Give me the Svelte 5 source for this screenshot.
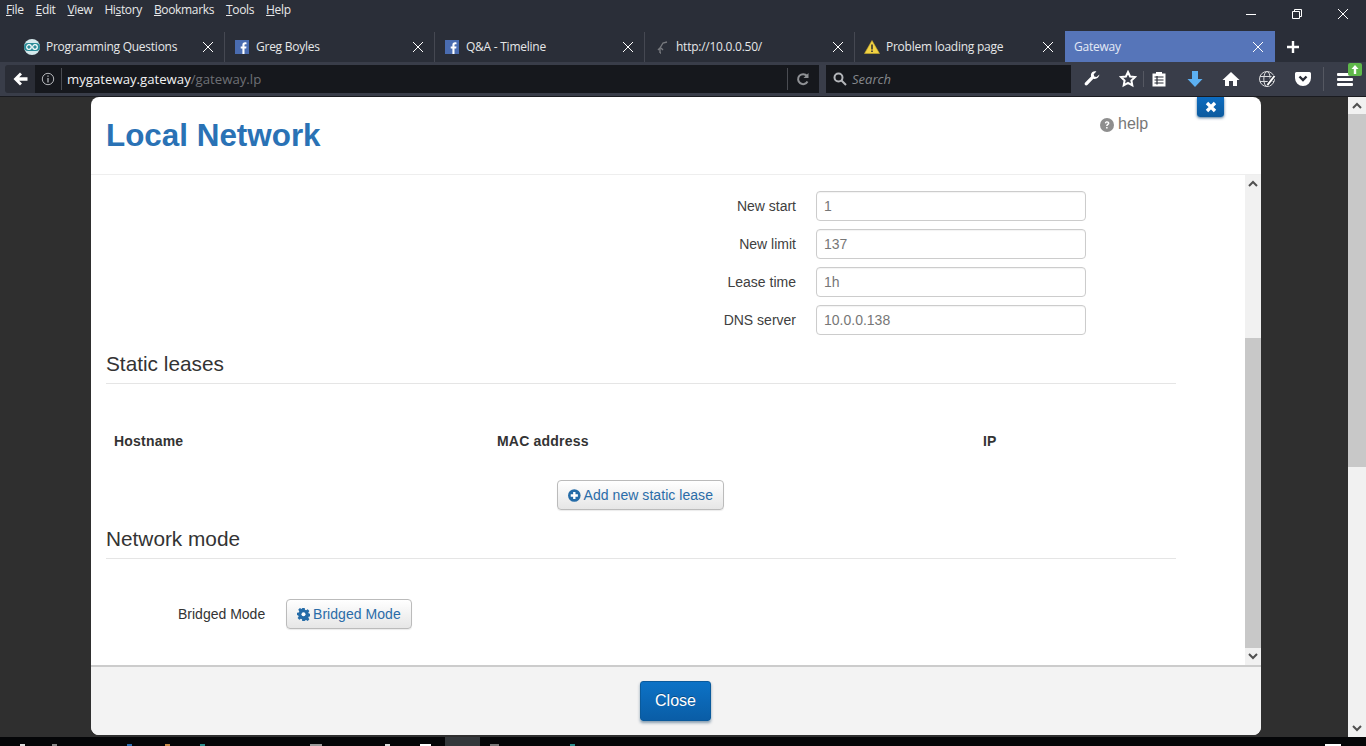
<script>
  const menus = [
    ['', 'F', 'ile'], ['', 'E', 'dit'], ['', 'V', 'iew'], ['Hi', 's', 'tory'], ['', 'B', 'ookmarks'], ['', 'T', 'ools'], ['', 'H', 'elp']
  ];
  const tabs = [
    { title: 'Programming Questions', icon: 'arduino' },
    { title: 'Greg Boyles', icon: 'fb' },
    { title: 'Q&A - Timeline', icon: 'fb' },
    { title: 'http://10.0.0.50/', icon: 'loading' },
    { title: 'Problem loading page', icon: 'warn' },
    { title: 'Gateway', icon: '', active: true }
  ];
  const fields = [
    { label: 'New start', value: '1' },
    { label: 'New limit', value: '137' },
    { label: 'Lease time', value: '1h' },
    { label: 'DNS server', value: '10.0.0.138' }
  ];
  // bits of the taskbar icons that peek out at the bottom edge
  const specks = [
    [20, 5, '#ddd'], [52, 5, '#888'], [127, 5, '#2a6db0'], [165, 5, '#c88a4a'], [200, 5, '#2a8c8c'],
    [310, 12, '#999'], [385, 5, '#ddd'], [420, 11, '#fff'], [490, 9, '#777'], [570, 5, '#2a8c8c'], [1325, 16, '#fff']
  ];
</script>

<div class="window">
  <header class="chrome">
    <div class="titlebar">
      <nav class="menu">
        {#each menus as m}
          <span class="menu-item">{m[0]}<u>{m[1]}</u>{m[2]}</span>
        {/each}
      </nav>
      <div class="win-controls">
        <svg width="12" height="12" viewBox="0 0 12 12" stroke="#fff" fill="none"><path d="M1 6.500h10" /></svg>
        <svg width="12" height="12" viewBox="0 0 12 12" stroke="#fff" fill="none"><path d="M1.500 3.500h7v7h-7zM3.500 3.500v-2h7v7h-2" /></svg>
        <svg width="12" height="12" viewBox="0 0 12 12" stroke="#fff" fill="none"><path d="M1 1l10 10M11 1L1 11" /></svg>
      </div>
    </div>

    <div class="tabstrip">
      {#each tabs as tab}
        <div class="tab" class:active={tab.active}>
          {#if tab.icon === 'arduino'}
            <svg class="fav" width="16" height="16" viewBox="0 0 16 16">
              <circle cx="8" cy="8" r="8" fill="#d5e9ec" />
              <rect x="0" y="4" width="16" height="8" rx="4" fill="#2a8c98" />
              <circle cx="5" cy="8" r="2.300" fill="none" stroke="#fff" stroke-width="1.200" />
              <circle cx="11" cy="8" r="2.300" fill="none" stroke="#fff" stroke-width="1.200" />
            </svg>
          {:else if tab.icon === 'fb'}
            <svg class="fav small" width="14" height="14" viewBox="0 0 14 14">
              <rect width="14" height="14" fill="#4a6cb0" />
              <path d="M9.500 14V8.600h1.700l.3-2.100h-2V5.200c0-.6.2-1 1-1h1V2.400c-.3 0-.9-.1-1.500-.1-1.600 0-2.600 1-2.600 2.700v1.500H5.700v2.100h1.700V14z" fill="#fff" />
            </svg>
          {:else if tab.icon === 'loading'}
            <svg class="fav small" width="14" height="14" viewBox="0 0 14 14" fill="none" stroke="#77797e" stroke-width="1.400">
              <path d="M5 13V8L3 10M5 8l3-5 4-1M5 13h1M6 8l2 2" />
            </svg>
          {:else if tab.icon === 'warn'}
            <svg class="fav" width="16" height="14" viewBox="0 0 16 14">
              <path d="M8 0.500L15.500 13.500H0.500z" fill="#f2d343" stroke="#c9a92c" stroke-width="0.600" />
              <path d="M7.200 4.500h1.600v5h-1.600zM7.200 10.500h1.600V12h-1.600z" fill="#333" />
            </svg>
          {/if}
          <span class="tab-title">{tab.title}</span>
          <svg class="tab-close" width="12" height="12" viewBox="0 0 12 12" stroke="#fff" fill="none"><path d="M1 1l10 10M11 1L1 11" /></svg>
        </div>
      {/each}
      <svg class="newtab" width="14" height="14" viewBox="0 0 14 14" fill="#fff"><path d="M5.800 1h2.400v4.800H13v2.400H8.200V13H5.800V8.200H1V5.800h4.800z" /></svg>
    </div>

    <div class="navbar">
      <button class="back" aria-label="Back">
        <svg width="15" height="14" viewBox="0 0 15 14" fill="#fff"><path d="M7 0.500l2 2L6.200 5.300H14.500v3.400H6.200L9 11.500l-2 2L0.500 7z" /></svg>
      </button>
      <div class="urlbar">
        <svg class="info" width="14" height="14" viewBox="0 0 14 14" fill="none" stroke="#b4b6ba"><circle cx="7" cy="7" r="5.700" /><path d="M7 6v4.500M7 3.400v1.300" stroke-width="1.300" /></svg>
        <span class="url"><b>mygateway.gateway</b><i>/gateway.lp</i></span>
        <svg class="reload" width="14" height="14" viewBox="0 0 14 14" fill="none" stroke="#8f9195" stroke-width="2"><path d="M11.500 9.500A5 5 0 1 1 11 4" /><path d="M12.500 1v5h-5z" fill="#8f9195" stroke="none" /></svg>
      </div>
      <div class="searchbar">
        <svg width="14" height="14" viewBox="0 0 14 14" fill="none" stroke="#b4b6ba" stroke-width="2"><circle cx="5.500" cy="5.500" r="4" /><path d="M8.500 8.500L13 13" /></svg>
        <span>Search</span>
      </div>
      <div class="tools">
        <svg width="18" height="18" viewBox="0 0 18 18" fill="#fff"><path d="M16.500 4.500l-3 2.500-2.200-.6-.6-2.200 2.700-2.700c-2.300-.8-4.800.3-5.400 2.700-.2.900-.1 1.700.1 2.400L2 12.700c-1.400 1.500.9 3.800 2.400 2.300l6-6.300c2.700.8 5.500-.9 6.100-4.200z" /></svg>
        <svg width="18" height="18" viewBox="0 0 18 18" fill="none" stroke="#fff" stroke-width="2"><path d="M9 2l2.100 4.500 4.900.6-3.600 3.400.9 4.900L9 13l-4.300 2.400.9-4.900L2 7.100l4.900-.6z" /></svg>
        <span class="tool-sep"></span>
        <svg width="18" height="18" viewBox="0 0 18 18"><path d="M2.500 3.500H6V2h6v1.500h3.500v13h-13z" fill="#fff" /><path d="M4.500 7h9M4.500 10h9M4.500 13h9M7 6v8.500" stroke="#2a2e38" stroke-width="1.200" /></svg>
        <svg width="18" height="18" viewBox="0 0 18 18" fill="#5cb0f2"><path d="M6 1h6v8h4.500L9 17 1.500 9H6z" /></svg>
        <svg width="18" height="18" viewBox="0 0 18 18" fill="#fff"><path d="M9 2l8.500 8H15v6h-4v-5H7v5H3v-6H.5z" /></svg>
        <svg width="18" height="18" viewBox="0 0 18 18" fill="none" stroke="#d8d9db" stroke-width="1"><circle cx="9" cy="9" r="7.500" /><ellipse cx="9" cy="9" rx="3.200" ry="7.500" /><path d="M2 6.500h14M2 11.500h14" /><path d="M16.500 6l-7 9" stroke="#2a2e38" stroke-width="4" /><path d="M16.500 6l-7 9" stroke="#fff" stroke-width="2" /></svg>
        <svg width="18" height="18" viewBox="0 0 18 18"><path d="M2.500 2h13A1.500 1.500 0 0 1 17 3.500V8a8 8 0 0 1-16 0V3.500A1.500 1.500 0 0 1 2.500 2z" fill="#fff" /><path d="M5.500 6.500L9 10l3.500-3.500" fill="none" stroke="#2a2e38" stroke-width="2.400" /></svg>
        <span class="tool-sep hamb-sep"></span>
        <div class="hamburger">
          <span></span><span></span><span></span>
          <i class="badge"><svg width="8" height="9" viewBox="0 0 8 9" fill="#fff"><path d="M4 0l3.500 4H5.200v5H2.800V4H.5z" /></svg></i>
        </div>
      </div>
    </div>
  </header>

  <main class="page">
    <div class="modal-wrap">
      <section class="modal">
        <button class="modal-x" aria-label="Dismiss">
          <svg width="12" height="12" viewBox="0 0 12 12" stroke="#fff" stroke-width="3.400"><path d="M2 2l8 8M10 2l-8 8" /></svg>
        </button>
        <div class="modal-head">
          <h1>Local Network</h1>
          <a class="help" href="#help">
            <svg width="14" height="14" viewBox="0 0 14 14"><circle cx="7" cy="7" r="7" fill="#8e8e8e" /><path d="M4.800 5.300C5 3.900 6 3.300 7.100 3.300c1.300 0 2.300.8 2.300 1.900 0 1.700-1.800 1.500-1.800 2.900H6.100c0-2 1.700-2 1.700-2.800 0-.4-.3-.7-.8-.7s-.8.300-.9.900zM6.100 9h1.500v1.500H6.100z" fill="#fff" /></svg>
            help
          </a>
        </div>

        <div class="modal-scroll">
          <div class="modal-body">
            <div class="fields">
              {#each fields as f}
                <div class="field">
                  <span class="field-label">{f.label}</span>
                  <div class="input">{f.value}</div>
                </div>
              {/each}
            </div>

            <h2>Static leases</h2>
            <div class="lease-head">
              <span class="c1">Hostname</span>
              <span class="c2">MAC address</span>
              <span class="c3">IP</span>
            </div>
            <div class="add-row">
              <button class="btn">
                <svg width="13" height="13" viewBox="0 0 13 13"><circle cx="6.500" cy="6.500" r="6.500" fill="#256ca8" /><path d="M5.300 2.800h2.400v2.500h2.500v2.400H7.700v2.500H5.300V7.700H2.800V5.300h2.500z" fill="#fff" /></svg>
                Add new static lease
              </button>
            </div>

            <h2>Network mode</h2>
            <div class="bridge-row">
              <span class="bridge-label">Bridged Mode</span>
              <button class="btn">
                <svg width="13" height="13" viewBox="0 0 13 13"><path d="M5.300 0h2.400l.3 1.800 1.100.5L10.700 1.200l1.700 1.700-1.100 1.600.5 1.100 1.800.3v2.400l-1.800.3-.5 1.100 1.100 1.600-1.700 1.700-1.600-1.100-1.100.5-.3 1.800H5.300L5 11.200l-1.100-.5-1.600 1.100L.6 10.100l1.100-1.600-.5-1.100L0 7.100V4.700l1.800-.3.500-1.100L1.200 1.700 2.900 0l1.600 1.100L5 .6z" fill="#256ca8" /><circle cx="6.500" cy="6.200" r="2" fill="#fff" /></svg>
                Bridged Mode
              </button>
            </div>
          </div>
          <div class="scrollbar inner">
            <svg class="arrow" width="10" height="7" viewBox="0 0 10 7" fill="none" stroke="#505050" stroke-width="2"><path d="M1 6l4-4 4 4" /></svg>
            <div class="track"><div class="thumb"></div></div>
            <svg class="arrow" width="10" height="7" viewBox="0 0 10 7" fill="none" stroke="#505050" stroke-width="2"><path d="M1 1l4 4 4-4" /></svg>
          </div>
        </div>

        <div class="modal-foot">
          <button class="close-btn">Close</button>
        </div>
      </section>

      <div class="scrollbar outer">
        <svg class="arrow" width="10" height="7" viewBox="0 0 10 7" fill="none" stroke="#505050" stroke-width="2"><path d="M1 6l4-4 4 4" /></svg>
        <div class="track"><div class="thumb"></div></div>
        <svg class="arrow" width="10" height="7" viewBox="0 0 10 7" fill="none" stroke="#505050" stroke-width="2"><path d="M1 1l4 4 4-4" /></svg>
      </div>
    </div>
  </main>

  <footer class="taskbar">
    <span class="task-active"></span>
    {#each specks as s}
      <span class="speck" style="left:{s[0]}px;width:{s[1]}px;background:{s[2]}"></span>
    {/each}
  </footer>
</div>

<style>
  :global(body) {
    margin: 0;
    background: #000;
    overflow: hidden;
  }

  .window {
    width: 1366px;
    height: 746px;
    display: flex;
    flex-direction: column;
    font-family: "Liberation Sans", Arial, sans-serif;
    overflow: hidden;
  }

  button {
    font-family: inherit;
    cursor: pointer;
  }

  /* browser chrome */
  .chrome {
    height: 97px;
    background: #2a2e38;
    color: #fff;
    font-family: "Open Sans", "Noto Sans", sans-serif;
    flex: none;
    box-sizing: border-box;
    border-bottom: 1px solid #1a1b20;
  }

  .titlebar {
    height: 31px;
    display: flex;
    justify-content: space-between;
  }

  .menu {
    display: flex;
    gap: 12px;
    padding: 1px 0 0 6px;
    font-size: 12px;
    letter-spacing: -0.35px;
    line-height: 17px;
    color: #e8e9ea;
  }

  .win-controls {
    display: flex;
    gap: 34px;
    padding: 8px 17px 0 0;
    height: 12px;
  }

  .tabstrip {
    height: 31px;
    display: flex;
    align-items: stretch;
    padding-left: 15px;
  }

  .tab {
    width: 210px;
    box-sizing: border-box;
    display: flex;
    align-items: center;
    position: relative;
    padding-left: 9px;
    font-size: 12px;
    letter-spacing: -0.25px;
    color: #e6e7e8;
  }

  .tab::after {
    content: "";
    position: absolute;
    right: 0;
    top: 1px;
    bottom: 0;
    width: 1px;
    background: #454852;
  }

  .tab.active {
    background: #5675b9;
    color: #e4e9f5;
  }

  .tab.active::after,
  .tab:nth-child(5)::after {
    display: none;
  }

  .fav {
    flex: none;
    margin-right: 6px;
  }

  .fav.small {
    margin-left: 1px;
    margin-right: 7px;
  }

  .tab-title {
    flex: 1;
  }

  .tab-close {
    flex: none;
    margin-right: 11px;
  }

  .newtab {
    align-self: center;
    margin-left: 11px;
  }

  .navbar {
    height: 34px;
    background: #393d49;
    display: flex;
    align-items: center;
    padding: 2px 0 3px 5px;
    box-sizing: border-box;
  }

  .back {
    width: 30px;
    height: 28px;
    background: #2a2d36;
    border: 0;
    border-radius: 3px 0 0 3px;
    padding: 0 0 0 1px;
    display: flex;
    align-items: center;
    justify-content: center;
  }

  .urlbar {
    width: 784px;
    height: 28px;
    box-sizing: border-box;
    background: #16181d;
    display: flex;
    align-items: center;
    padding-left: 6px;
    font-size: 13.200px;
  }

  .info {
    margin-right: 6px;
  }

  .url {
    flex: 1;
    border-left: 1px solid #4a4c52;
    padding-left: 5px;
    line-height: 22px;
  }

  .url b {
    font-weight: 400;
    color: #f2f2f2;
  }

  .url i {
    font-style: normal;
    color: #6e7075;
  }

  .reload {
    border-left: 1px solid #4a4c52;
    padding: 4px 9px 4px 8px;
  }

  .searchbar {
    width: 245px;
    height: 28px;
    margin-left: 7px;
    box-sizing: border-box;
    background: #16181d;
    display: flex;
    align-items: center;
    gap: 5px;
    padding-left: 7px;
    font-size: 13px;
    font-style: italic;
    color: #85878b;
  }

  .tools {
    display: flex;
    align-items: center;
    margin-left: 12px;
    gap: 18px;
    position: relative;
  }

  .tool-sep {
    width: 1px;
    height: 16px;
    background: #555862;
    margin: 0 -12px;
  }

  .hamb-sep {
    margin: 0 -5px 0 -7px;
    height: 24px;
  }

  .hamburger {
    width: 16px;
    display: flex;
    flex-direction: column;
    gap: 2px;
    position: relative;
    margin-top: 1px;
  }

  .hamburger span {
    height: 3px;
    background: #fff;
    border-radius: 1px;
  }

  .badge {
    position: absolute;
    left: 11px;
    top: -10px;
    width: 14px;
    height: 13px;
    background: #5fb84a;
    border-radius: 2px;
    display: flex;
    align-items: center;
    justify-content: center;
  }

  /* page */
  .page {
    flex: none;
    height: 640px;
    background: #2f2f2f;
  }

  .modal-wrap {
    height: 100%;
    display: flex;
    padding-left: 91px;
    box-sizing: border-box;
  }

  .modal {
    width: 1170px;
    height: 638px;
    background: #fff;
    border-radius: 8px;
    display: flex;
    flex-direction: column;
    position: relative;
    overflow: hidden;
    flex: none;
  }

  .modal-x {
    position: absolute;
    right: 37px;
    top: 0;
    width: 27px;
    height: 20px;
    padding: 0;
    border: 0;
    border-radius: 0 0 3px 3px;
    background: linear-gradient(#0d6cc0, #0b5a9e);
    box-shadow: 0 1px 3px rgba(0, 60, 110, 0.7);
    display: flex;
    align-items: center;
    justify-content: center;
  }

  .modal-head {
    height: 78px;
    flex: none;
    box-sizing: border-box;
    border-bottom: 1px solid #eee;
    position: relative;
    padding: 20px 15px 0;
  }

  h1 {
    margin: 0;
    font-size: 31.400px;
    line-height: 38px;
    font-weight: 700;
    color: #2a72b5;
  }

  .help {
    position: absolute;
    left: 1009px;
    top: 17px;
    display: flex;
    align-items: center;
    gap: 4px;
    font-size: 16px;
    line-height: 20px;
    color: #777;
    text-decoration: none;
  }

  .help svg {
    margin-top: 2px;
  }

  .modal-scroll {
    flex: 1;
    min-height: 0;
    display: flex;
  }

  .modal-body {
    flex: 1;
    min-width: 0;
    padding: 16px 0 0 15px;
    color: #333;
    font-size: 14px;
  }

  .fields {
    display: flex;
    flex-direction: column;
    gap: 8px;
  }

  .field {
    display: flex;
    align-items: center;
    height: 30px;
  }

  .field-label {
    width: 690px;
    text-align: right;
    margin-right: 20px;
    color: #404040;
  }

  .input {
    width: 270px;
    height: 30px;
    box-sizing: border-box;
    border: 1px solid #ccc;
    border-radius: 4px;
    padding: 0 7px;
    line-height: 28px;
    color: #777;
    box-shadow: inset 0 1px 1px rgba(0, 0, 0, 0.05);
  }

  h2 {
    margin: 14px 0 0;
    height: 35px;
    padding-top: 3px;
    box-sizing: border-box;
    border-bottom: 1px solid #e5e5e5;
    font-size: 20.800px;
    line-height: 24px;
    font-weight: 400;
    color: #333;
    width: 1070px;
  }

  .lease-head {
    display: flex;
    font-weight: 700;
    letter-spacing: 0.2px;
    padding: 49px 0 0 8px;
    line-height: 17px;
    color: #333;
  }

  .c1 { width: 383px; }
  .c2 { width: 486px; }

  .add-row {
    display: flex;
    justify-content: center;
    width: 1070px;
    margin-top: 30px;
  }

  .btn {
    height: 30px;
    box-sizing: border-box;
    border: 1px solid #bbb;
    border-radius: 4px;
    background: linear-gradient(#fff, #e6e6e6);
    color: #2a6ca8;
    font-size: 14px;
    letter-spacing: 0.05px;
    padding: 0 10px;
    display: inline-flex;
    align-items: center;
    gap: 2px;
    white-space: nowrap;
    box-shadow: 0 1px 1px rgba(0, 0, 0, 0.08);
  }

  .btn svg {
    margin-right: 1px;
  }

  .add-row .btn {
    width: 167px;
    margin-right: 1px;
  }

  .bridge-row .btn {
    width: 126px;
  }

  .bridge-row {
    display: flex;
    align-items: center;
    margin-top: 40px;
    padding-left: 72px;
  }

  .bridge-label {
    width: 108px;
    color: #333;
  }

  .scrollbar {
    display: flex;
    flex-direction: column;
    align-items: center;
    background: #f1f1f1;
    flex: none;
  }

  .scrollbar .arrow {
    flex: none;
    margin: 5px 0;
  }

  .track {
    flex: 1;
    width: 100%;
    position: relative;
  }

  .thumb {
    position: absolute;
    left: 0;
    right: 0;
    background: #c8c8c8;
  }

  .scrollbar.inner {
    width: 16px;
  }

  .inner .thumb {
    top: 146px;
    bottom: 0;
  }

  .scrollbar.outer {
    width: 18px;
    margin-left: 87px;
    height: 640px;
  }

  .outer .thumb {
    top: 0;
    height: 353px;
  }

  .modal-foot {
    height: 70px;
    flex: none;
    box-sizing: border-box;
    border-top: 2px solid #ccc;
    background: #f3f3f3;
    display: flex;
    align-items: center;
    justify-content: center;
  }

  .close-btn {
    width: 71px;
    height: 40px;
    margin-right: 1px;
    border: 1px solid #0a5a9c;
    border-radius: 3px;
    background: linear-gradient(#0c72c6, #0a5da6);
    color: #fff;
    font-size: 16px;
    padding: 0;
    box-shadow: 0 2px 3px rgba(0, 50, 90, 0.45);
    text-shadow: 0 -1px 0 rgba(0, 0, 0, 0.3);
  }

  .taskbar {
    flex: 1;
    background: #050608;
    position: relative;
  }

  .task-active {
    position: absolute;
    left: 445px;
    top: 0;
    width: 35px;
    bottom: 0;
    background: #33373a;
  }

  .speck {
    position: absolute;
    bottom: 0;
    height: 2px;
  }
</style>
